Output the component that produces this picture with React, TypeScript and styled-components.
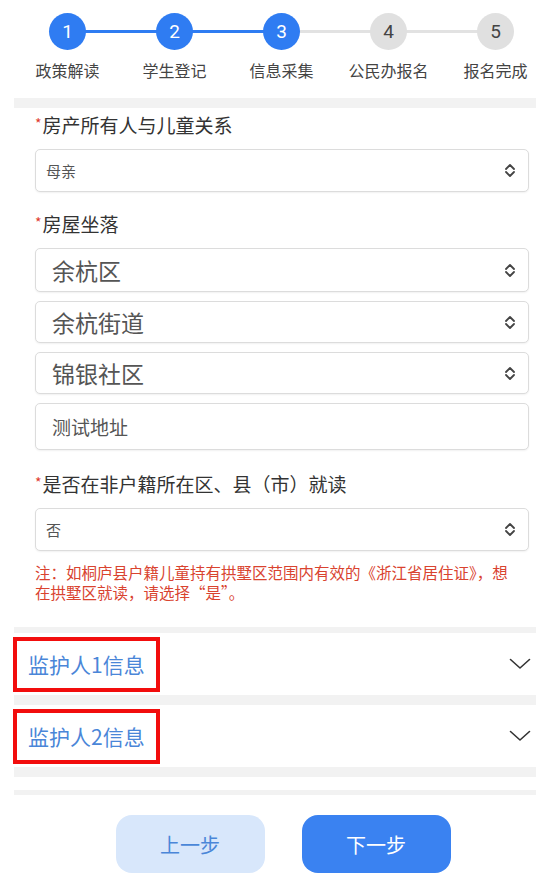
import React from 'react'
import styled, { createGlobalStyle } from 'styled-components'

const GlobalStyle = createGlobalStyle`
  body {
    margin: 0;
    background: #ffffff;
    font-family: "Noto Sans CJK SC", "Noto Sans", sans-serif;
    color: #333333;
  }
`

const Page = styled.div`
  width: 548px;
  height: 884px;
  overflow: hidden;
  background: #ffffff;
`

const Stepper = styled.div`
  display: grid;
  grid-template-columns: repeat(5, 107px);
  padding: 13px 0 0 14px;
  height: 85px;
`

const Step = styled.div<{ $line?: 'blue' | 'gray' }>`
  position: relative;
  display: flex;
  flex-direction: column;
  align-items: center;

  &::before {
    content: '';
    display: ${(p) => (p.$line ? 'block' : 'none')};
    position: absolute;
    top: 17px;
    left: -53px;
    width: 107px;
    height: 3px;
    background: ${(p) => (p.$line === 'blue' ? '#2f7cf2' : '#e2e2e2')};
  }
`

const Circle = styled.div<{ $active: boolean }>`
  position: relative;
  z-index: 1;
  width: 37px;
  height: 37px;
  border-radius: 50%;
  display: flex;
  align-items: center;
  justify-content: center;
  font-family: "Roboto", "Liberation Sans", sans-serif;
  font-size: 19px;
  background: ${(p) => (p.$active ? '#2f7cf2' : '#e0e0e0')};
  color: ${(p) => (p.$active ? '#ffffff' : '#444444')};
`

const StepLabel = styled.div`
  margin-top: 9px;
  font-size: 16px;
  line-height: 22px;
  color: #444444;
  white-space: nowrap;
`

const Band = styled.div<{ $h: number }>`
  margin: 0 12px 0 14px;
  height: ${(p) => p.$h}px;
  background: #f2f2f2;
`

const Form = styled.div`
  padding: 2px 19px 0 35px;
  display: flex;
  flex-direction: column;
`

const FieldLabel = styled.div<{ $gap: number }>`
  margin-top: ${(p) => p.$gap}px;
  font-size: 19px;
  line-height: 26px;
  color: #333333;
  white-space: nowrap;
`

const Star = styled.span`
  color: #e03b2e;
  font-size: 14px;
  vertical-align: 4px;
  margin-right: 1px;
`

const Stack = styled.div`
  margin-top: 11px;
  display: flex;
  flex-direction: column;
  gap: 9px;
`

const SelectBox = styled.div<{ $big?: boolean; $h?: number }>`
  box-sizing: border-box;
  height: ${(p) => p.$h ?? 43}px;
  border: 1px solid #dcdcdc;
  border-radius: 5px;
  box-shadow: 0 1px 2px rgba(0, 0, 0, 0.06);
  display: flex;
  align-items: center;
  justify-content: space-between;
  padding: 0 12px 0 ${(p) => (p.$big ? 16 : 10)}px;
  font-size: ${(p) => (p.$big ? 23 : 15)}px;
  color: #555555;
  background: #ffffff;
`

const InputBox = styled(SelectBox)`
  font-size: 19px;
  padding-left: 16px;
`

const Note = styled.div`
  margin-top: 11px;
  padding-right: 6px;
  font-size: 15.5px;
  line-height: 20px;
  color: #d9432f;
`

const Section = styled.div`
  margin: 0 12px 0 13px;
  height: 62px;
  display: flex;
  align-items: center;
  justify-content: space-between;
`

const SectionTitle = styled.div`
  box-sizing: border-box;
  width: 147px;
  height: 55px;
  border: 4px solid #f20d0d;
  padding-left: 11px;
  display: flex;
  align-items: center;
  font-size: 21px;
  color: #4a86d8;
  white-space: nowrap;
`

const Chevron = styled.svg`
  margin-right: 5px;
`

const Spacer = styled.div<{ $h: number }>`
  height: ${(p) => p.$h}px;
`

const Buttons = styled.div`
  margin-top: 20px;
  padding-left: 18px;
  display: flex;
  justify-content: center;
  gap: 37px;
`

const Button = styled.button<{ $primary?: boolean }>`
  width: 149px;
  height: 58px;
  border: none;
  border-radius: 16px;
  font-family: inherit;
  font-size: 20px;
  background: ${(p) => (p.$primary ? '#3a82f1' : '#d8e7fb')};
  color: ${(p) => (p.$primary ? '#ffffff' : '#4a86d8')};
`

const UpDown = () => (
  <svg width="12" height="15" viewBox="0 0 12 15" fill="none">
    <path d="M2 6 L6 2 L10 6" stroke="#444" strokeWidth="1.8" strokeLinecap="round" strokeLinejoin="round" />
    <path d="M2 9 L6 13 L10 9" stroke="#444" strokeWidth="1.8" strokeLinecap="round" strokeLinejoin="round" />
  </svg>
)

const ChevronDown = () => (
  <Chevron width="22" height="12" viewBox="0 0 22 12" fill="none">
    <path d="M1.5 1.5 L11 10 L20.5 1.5" stroke="#333" strokeWidth="1.6" strokeLinecap="round" strokeLinejoin="round" />
  </Chevron>
)

const steps = [
  { n: 1, label: '政策解读', active: true },
  { n: 2, label: '学生登记', active: true },
  { n: 3, label: '信息采集', active: true },
  { n: 4, label: '公民办报名', active: false },
  { n: 5, label: '报名完成', active: false },
]

export default function App() {
  return (
    <Page>
      <GlobalStyle />
      <Stepper>
        {steps.map((s, i) => (
          <Step key={s.n} $line={i === 0 ? undefined : s.active ? 'blue' : 'gray'}>
            <Circle $active={s.active}>{s.n}</Circle>
            <StepLabel>{s.label}</StepLabel>
          </Step>
        ))}
      </Stepper>
      <Band $h={10} />
      <Form>
        <FieldLabel $gap={0}>
          <Star>*</Star>房产所有人与儿童关系
        </FieldLabel>
        <Stack>
          <SelectBox>
            母亲
            <UpDown />
          </SelectBox>
        </Stack>
        <FieldLabel $gap={17}>
          <Star>*</Star>房屋坐落
        </FieldLabel>
        <Stack>
          <SelectBox $big $h={44}>
            余杭区
            <UpDown />
          </SelectBox>
          <SelectBox $big $h={42}>
            余杭街道
            <UpDown />
          </SelectBox>
          <SelectBox $big $h={42}>
            锦银社区
            <UpDown />
          </SelectBox>
          <InputBox $h={47}>测试地址</InputBox>
        </Stack>
        <FieldLabel $gap={19}>
          <Star>*</Star>是否在非户籍所在区、县（市）就读
        </FieldLabel>
        <Stack>
          <SelectBox>
            否
            <UpDown />
          </SelectBox>
        </Stack>
        <Note>注：如桐庐县户籍儿童持有拱墅区范围内有效的《浙江省居住证》，想在拱墅区就读，请选择“是”。</Note>
      </Form>
      <Spacer $h={25} />
      <Band $h={6} />
      <Section>
        <SectionTitle>监护人1信息</SectionTitle>
        <ChevronDown />
      </Section>
      <Band $h={10} />
      <Section>
        <SectionTitle>监护人2信息</SectionTitle>
        <ChevronDown />
      </Section>
      <Band $h={10} />
      <Spacer $h={13} />
      <Band $h={5} />
      <Buttons>
        <Button>上一步</Button>
        <Button $primary>下一步</Button>
      </Buttons>
    </Page>
  )
}
